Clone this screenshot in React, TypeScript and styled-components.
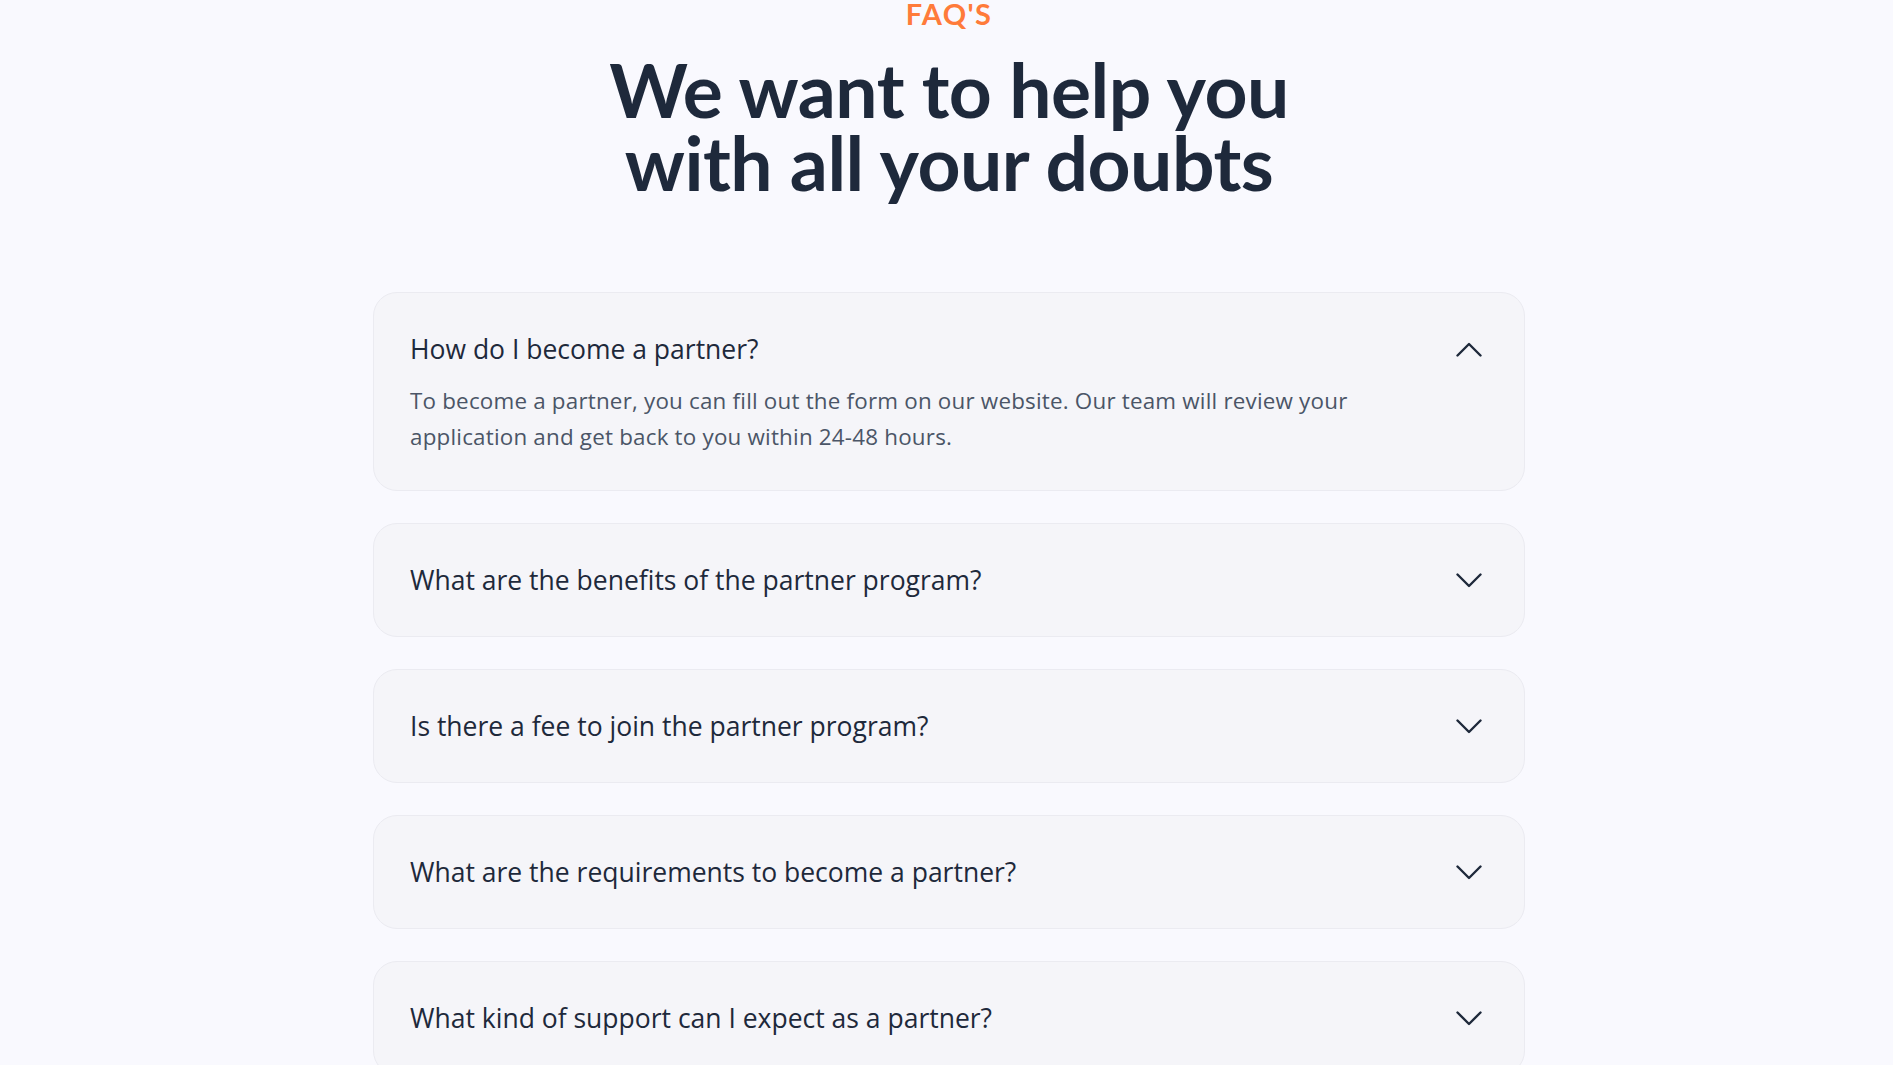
import React, { useState } from "react";
import styled, { createGlobalStyle } from "styled-components";

const Global = createGlobalStyle`
  html, body { margin: 0; padding: 0; background: #F9F9FE; }
  body { font-family: "Lato", "Inter", "Liberation Sans", sans-serif; -webkit-font-smoothing: antialiased; }
  * { box-sizing: border-box; }
`;

const Section = styled.section`
  display: flex;
  flex-direction: column;
  align-items: center;
  padding: 0 0 40px 5px;
  min-height: 1065px;
`;

const Eyebrow = styled.div`
  color: #FF7B3A;
  font-size: 29px;
  font-weight: 700;
  line-height: 29px;
  margin-top: -1px;
  letter-spacing: 1.4px;
`;

const Title = styled.h2`
  margin: 25px 0 0;
  color: #1E293B;
  font-size: 75px;
  font-weight: 700;
  line-height: 73px;
  text-align: center;
  letter-spacing: -0.5px;
`;

const List = styled.div`
  width: 1152px;
  margin-top: 93px;
  display: flex;
  flex-direction: column;
  gap: 32px;
`;

const Card = styled.div`
  background: #F5F5F9;
  border: 1px solid #EBEBF1;
  border-radius: 24px;
  padding: 35px 36px;
  font-family: "Open Sans", "Lato", sans-serif;
`;

const Header = styled.button`
  all: unset;
  width: 100%;
  display: flex;
  align-items: center;
  justify-content: space-between;
  cursor: pointer;
`;

const Question = styled.span`
  color: #1E293B;
  font-size: 26.5px;
  font-weight: 500;
  line-height: 42px;
`;

const IconBox = styled.span`
  width: 32px;
  height: 32px;
  display: flex;
  align-items: center;
  justify-content: center;
  margin-right: 3px;
  color: #1E293B;
`;

const Answer = styled.p`
  margin: 13px 0 0;
  max-width: 1000px;
  color: #4B5567;
  font-size: 22.4px;
  line-height: 36px;
  letter-spacing: 0.2px;
`;

const Chevron = ({ up }: { up: boolean }) => (
  <svg width="26" height="15" viewBox="0 0 26 15" fill="none">
    <path
      d={up ? "M1.5 13.5 L13 2 L24.5 13.5" : "M1.5 1.5 L13 13 L24.5 1.5"}
      stroke="currentColor"
      strokeWidth="2.4"
      strokeLinecap="round"
      strokeLinejoin="round"
    />
  </svg>
);

const faqs = [
  {
    q: "How do I become a partner?",
    a: "To become a partner, you can fill out the form on our website. Our team will review your application and get back to you within 24-48 hours.",
  },
  { q: "What are the benefits of the partner program?", a: "Partners get access to exclusive resources, commissions and dedicated support." },
  { q: "Is there a fee to join the partner program?", a: "No, joining the partner program is completely free." },
  { q: "What are the requirements to become a partner?", a: "You need an active business and a commitment to our quality standards." },
  { q: "What kind of support can I expect as a partner?", a: "You will have a dedicated partner manager and access to our support team." },
];

export default function App() {
  const [open, setOpen] = useState<number>(0);
  return (
    <>
      <Global />
      <Section>
        <Eyebrow>FAQ'S</Eyebrow>
        <Title>
          We want to help you
          <br />
          with all your doubts
        </Title>
        <List>
          {faqs.map((f, i) => (
            <Card key={f.q}>
              <Header onClick={() => setOpen(open === i ? -1 : i)}>
                <Question>{f.q}</Question>
                <IconBox>
                  <Chevron up={open === i} />
                </IconBox>
              </Header>
              {open === i && <Answer>{f.a}</Answer>}
            </Card>
          ))}
        </List>
      </Section>
    </>
  );
}
